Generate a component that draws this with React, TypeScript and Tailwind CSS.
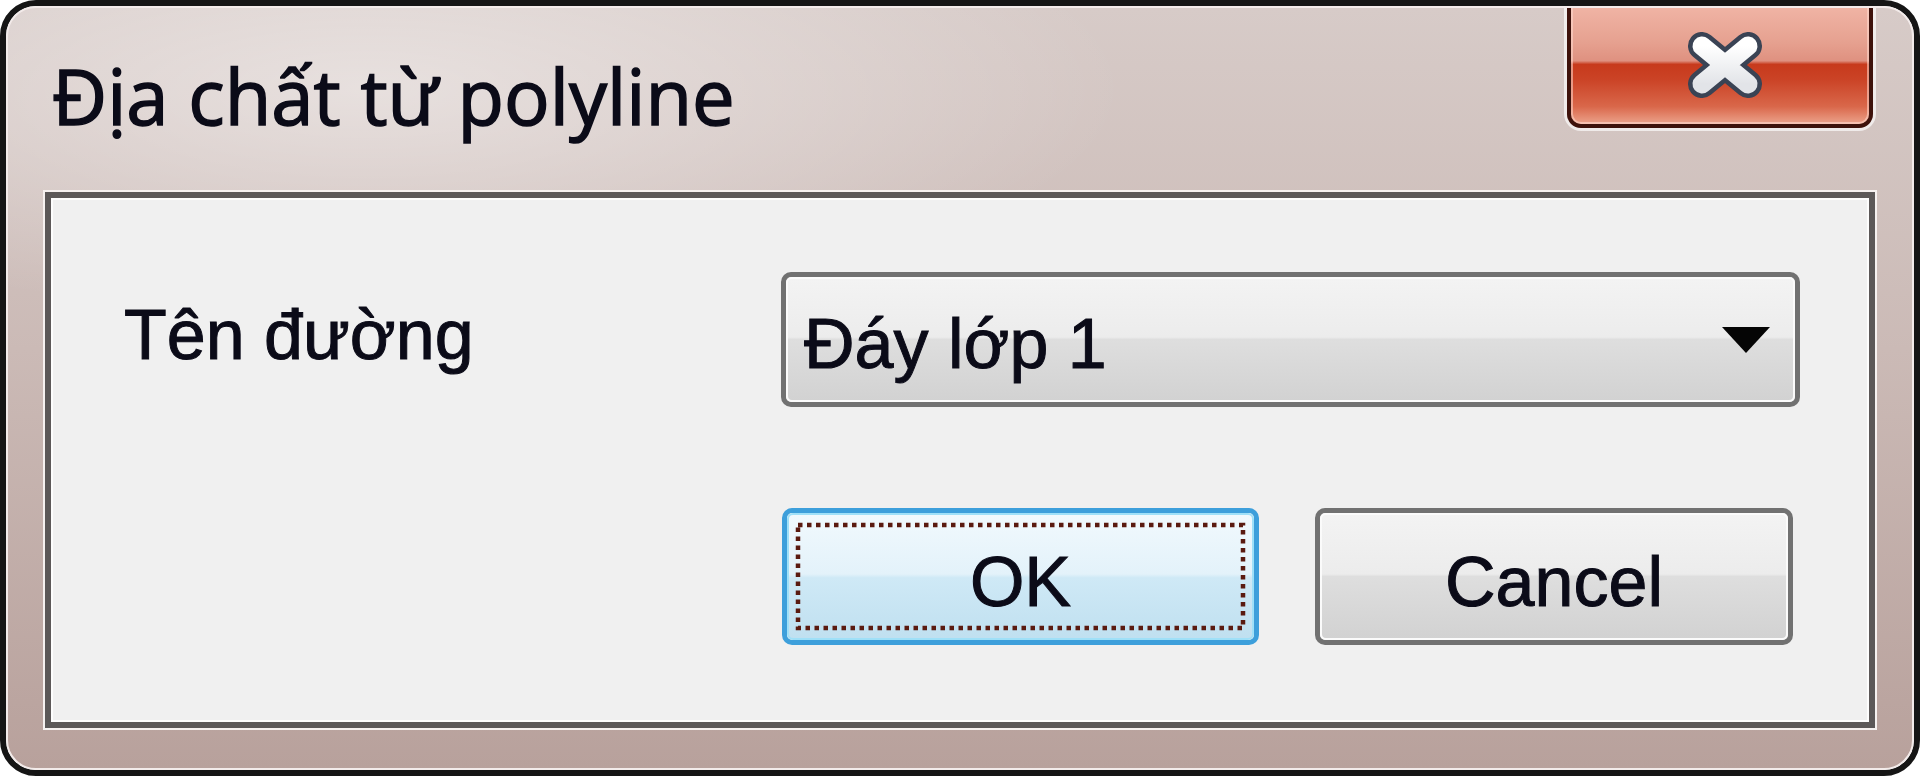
import React from "react";

function CloseGlyph() {
  return (
    <svg width="76" height="66" viewBox="0 0 76 66">
      <defs>
        <linearGradient id="xg" x1="0" y1="0" x2="0" y2="1">
          <stop offset="0" stopColor="#ffffff" />
          <stop offset="1" stopColor="#e2e4e8" />
        </linearGradient>
      </defs>
      <g strokeLinecap="round" strokeLinejoin="round" fill="none">
        <path d="M15 14 L61 52 M61 14 L15 52" stroke="#3a4354" strokeWidth="28" />
        <path d="M15 14 L61 52 M61 14 L15 52" stroke="url(#xg)" strokeWidth="19" />
      </g>
    </svg>
  );
}

function ComboArrow() {
  return (
    <svg width="50" height="28" viewBox="0 0 50 28">
      <path d="M1 1 L49 1 L25 27 Z" fill="#050505" />
    </svg>
  );
}

function FocusRect() {
  return (
    <svg
      className="absolute left-0 top-0"
      width="463"
      height="123"
      viewBox="0 0 463 123"
    >
      <rect
        x="9"
        y="10"
        width="445"
        height="103"
        fill="none"
        stroke="#5a1a10"
        strokeWidth="4.5"
        strokeDasharray="4.5 4.5"
      />
    </svg>
  );
}

export default function App() {
  return (
    <div className="w-[1920px] h-[776px] bg-white text-[#0b0b18]">
      <div className="h-full w-full rounded-[36px] border-[6px] border-[#151515] overflow-hidden">
        <div className="h-full w-full flex flex-col rounded-[30px] border-2 border-[#f3ebea] overflow-hidden bg-[radial-gradient(ellipse_760px_230px_at_360px_80px,rgba(255,255,255,0.45),rgba(255,255,255,0)),linear-gradient(180deg,#d7cbc8_0%,#cbbab6_45%,#b8a19c_100%)]">
          {/* Title bar */}
          <div className="h-[182px] shrink-0 flex items-start justify-between">
            <div className="pl-[44px] pt-[50px] font-['Open_Sans','Noto_Sans',sans-serif] text-[76px] leading-none whitespace-nowrap [-webkit-text-stroke:1.5px_#0b0b18]">
              Địa chất từ polyline
            </div>
            <div className="mr-[39px] -mt-px w-[306px] h-[121px] rounded-b-[14px] border-x-[4px] border-b-[4px] border-[#3e120b] shadow-[0_0_0_3px_rgba(255,255,255,0.65)] bg-[linear-gradient(180deg,#f0b4a5_0%,#e6a190_30%,#df9180_46%,#c73a1c_49%,#cb4326_62%,#d9674a_85%,#eca38c_100%)] flex items-center justify-center">
              <div className="w-full h-full rounded-b-[10px] border-x-2 border-b-2 border-[rgba(255,220,210,0.55)] flex items-center justify-center pl-[10px]">
                <CloseGlyph />
              </div>
            </div>
          </div>

          {/* Client panel */}
          <div className="mx-[35px] mb-[38px] flex-1 border-2 border-[#f6f1f0]">
            <div className="h-full border-[6px] border-[#5c5858]">
              <div className="h-full border-2 border-[#fdfdfd] bg-[#f0f0f0] flex flex-col pt-[72px] font-['Liberation_Sans',Arial,sans-serif] text-[70px] leading-none [-webkit-text-stroke:1px_#0b0b18]">
                {/* Row 1 */}
                <div className="flex items-start">
                  <div className="w-[728px] shrink-0 pl-[71px] pt-[28px] whitespace-nowrap">
                    Tên đường
                  </div>
                  <div className="w-[1019px] h-[135px] rounded-[10px] border-[5px] border-[#717171]">
                    <div className="h-full rounded-[6px] border-2 border-[#fbfbfb] bg-[linear-gradient(180deg,#f3f3f3_0%,#ececec_48%,#dedede_50%,#d2d2d2_100%)] flex items-center justify-between pl-[16px] pr-[22px]">
                      <span className="pt-[8px] whitespace-nowrap">Đáy lớp 1</span>
                      <ComboArrow />
                    </div>
                  </div>
                </div>

                {/* Row 2 */}
                <div className="mt-[101px] ml-[729px] flex gap-[56px]">
                  <div className="w-[477px] h-[137px] rounded-[10px] border-[5px] border-[#3d9fdb]">
                    <div className="relative h-full rounded-[6px] border-2 border-[#9fe0f8] bg-[linear-gradient(180deg,#f1f9fd_0%,#e3f2fa_48%,#cfe9f6_51%,#c0e0f0_100%)] flex items-center justify-center">
                      <span className="pt-[10px]">OK</span>
                      <FocusRect />
                    </div>
                  </div>
                  <div className="w-[478px] h-[137px] rounded-[10px] border-[5px] border-[#717171]">
                    <div className="h-full rounded-[6px] border-2 border-[#fbfbfb] bg-[linear-gradient(180deg,#f3f3f3_0%,#ececec_48%,#dedede_50%,#d2d2d2_100%)] flex items-center justify-center">
                      <span className="pt-[10px]">Cancel</span>
                    </div>
                  </div>
                </div>
              </div>
            </div>
          </div>
        </div>
      </div>
    </div>
  );
}
